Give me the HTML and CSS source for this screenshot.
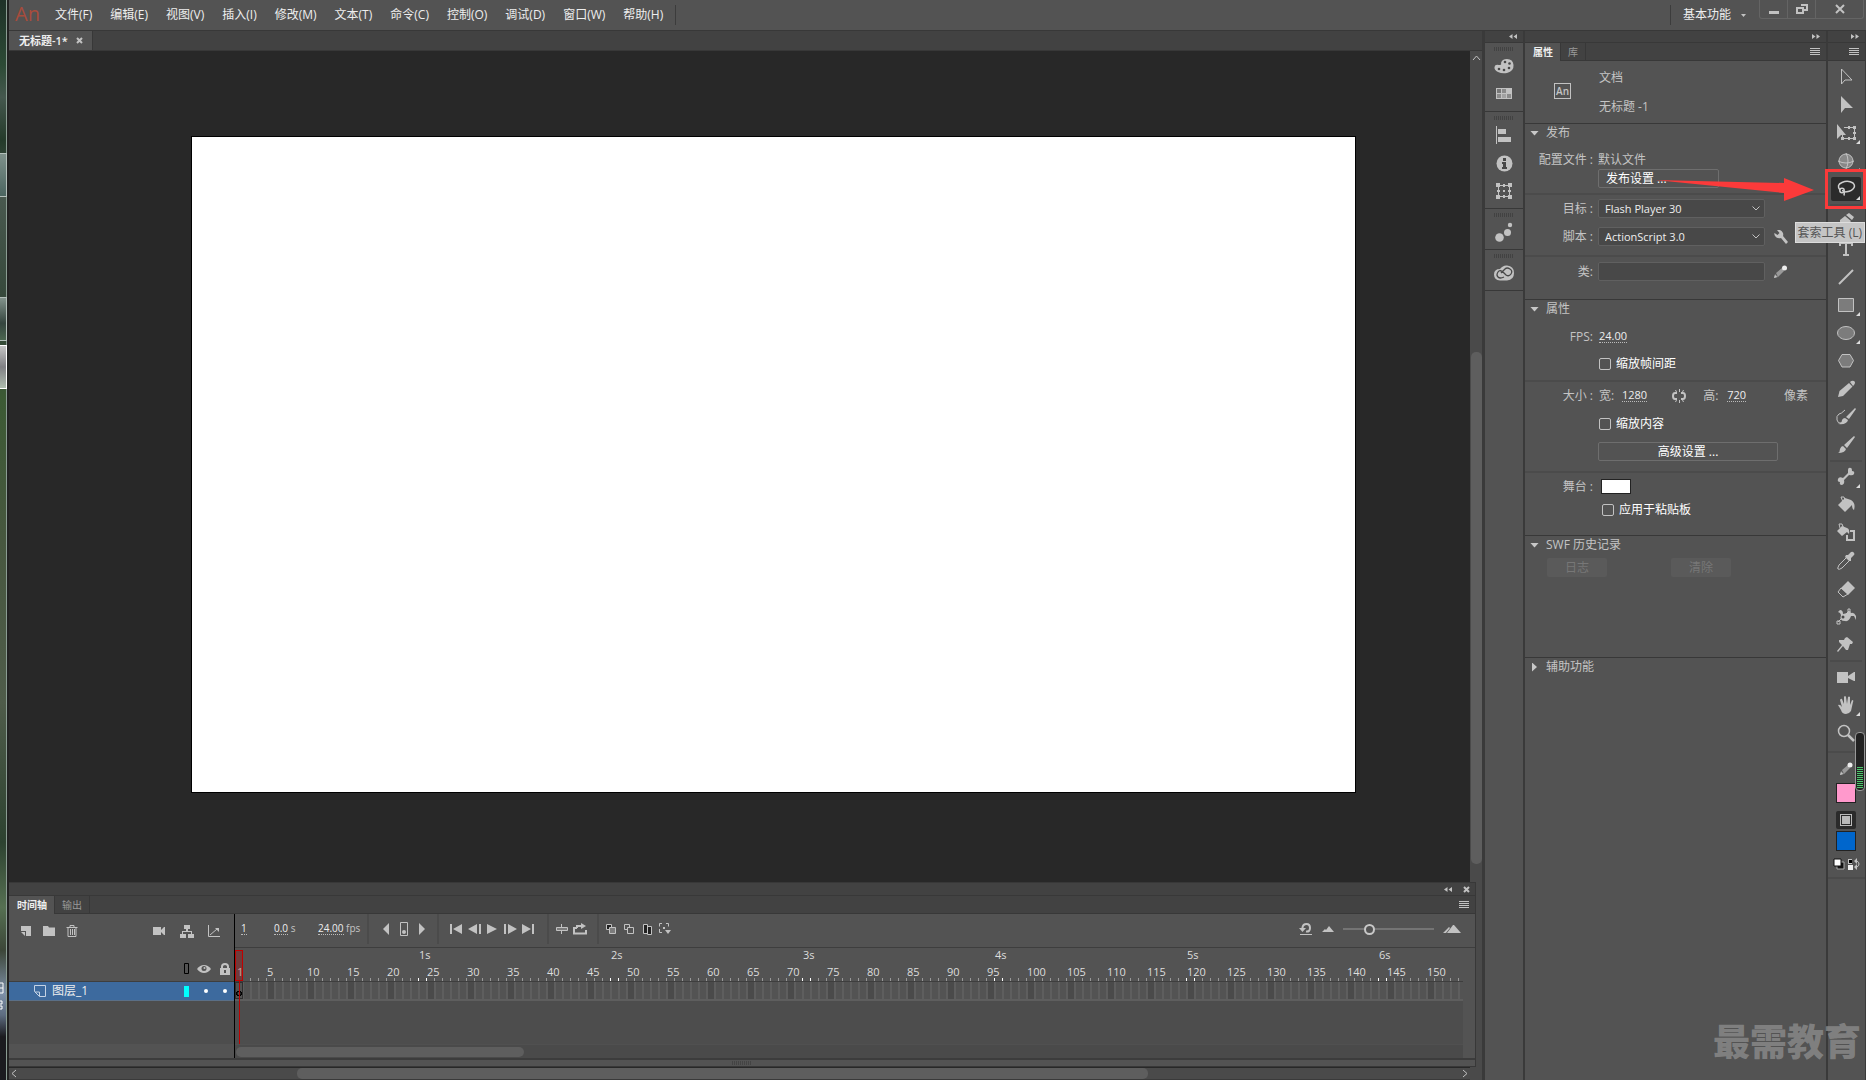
FILE: index.html
```html
<!DOCTYPE html>
<html lang="zh-CN">
<head>
<meta charset="utf-8">
<title>无标题-1*</title>
<link rel="stylesheet" href="styles.css">
</head>
<body>
<div class="desktop">
  <i class="desk-item"></i><i class="desk-item dark"></i><i class="desk-item light"></i>
  <svg class="desk-glyph" width="4" height="28" viewBox="0 0 4 28"><path d="M0 1h3v10H0M0 6h3M0 19h2v3H0M0 24h2v3H0" fill="none" stroke="#fff"/></svg>
</div>
<div class="app">
  <header class="menubar">
    <span class="logo">An</span>
    <nav class="menus">
      <button>文件(F)</button><button>编辑(E)</button><button>视图(V)</button><button>插入(I)</button><button>修改(M)</button><button>文本(T)</button><button>命令(C)</button><button>控制(O)</button><button>调试(D)</button><button>窗口(W)</button><button>帮助(H)</button>
    </nav>
    <button class="workspace-pick">基本功能 <svg width="5" height="3" viewBox="0 0 5 3"><path d="M0 0h5L2.500 3z"/></svg></button>
    <div class="window-buttons">
      <button aria-label="最小化"><svg width="12" height="12" viewBox="0 0 12 12"><path d="M1 8h10v3H1z"/></svg></button>
      <button aria-label="还原"><svg width="12" height="12" viewBox="0 0 12 12"><path class="line w2" d="M5 2h6v5H8M1 5h6v5H1z"/></svg></button>
      <button class="wide" aria-label="关闭"><svg width="12" height="12" viewBox="0 0 12 12"><path class="line w2" d="M2 2l8 8M10 2l-8 8"/></svg></button>
    </div>
  </header>

  <div class="workspace">
    <main class="document">
      <div class="doc-tabs"><div class="doc-tab">无标题-1* <button aria-label="关闭文档"><svg width="7" height="7" viewBox="0 0 7 7"><path class="line w2" d="M1 1l5 5M6 1L1 6"/></svg></button></div></div>
      <div class="view">
        <div class="pasteboard"><div class="stage"></div></div>
        <div class="vscroll"><svg width="9" height="16" viewBox="0 0 9 16"><path class="line" d="M1 9l3.500-4L8 9"/></svg><div class="vtrack"><i></i></div></div>
      </div>

      <section class="timeline">
        <div class="tl-top">
          <button aria-label="折叠"><svg width="8" height="5" viewBox="0 0 8 5"><path d="M3.500 0v5L0 2.500zM8 0v5L4.500 2.500z"/></svg></button>
          <button aria-label="关闭"><svg width="7" height="7" viewBox="0 0 7 7"><path class="line w2" d="M1 1l5 5M6 1L1 6"/></svg></button>
        </div>
        <div class="tabs tl-tabs"><button class="tab on">时间轴</button><button class="tab">输出</button>
          <button class="panel-menu" aria-label="菜单"><svg width="10" height="8" viewBox="0 0 10 8"><path d="M0 0h10v1H0zM0 2h10v1H0zM0 4h10v1H0zM0 6h10v1H0z"/></svg></button></div>
        <div class="tl-body">
          <div class="layers">
            <div class="layer-tools">
              <button aria-label="新建图层"><svg width="12" height="12" viewBox="0 0 12 12"><path d="M1 1h10v10H6V6H1zM1 7h4v4z"/></svg></button>
              <button aria-label="新建文件夹"><svg width="14" height="12" viewBox="0 0 14 12"><path d="M1 1h5l1 1.500h6V11H1z"/></svg></button>
              <button aria-label="删除"><svg width="12" height="12" viewBox="0 0 12 12"><path class="line" d="M0.500 2.500h11M4 2V.500h4V2M2 3v8.500h8V3M4.500 4v6M6.500 4v6M8.500 4v6"/></svg></button>
              <span class="fill"></span>
              <button class="far" aria-label="摄像头"><svg width="13" height="10" viewBox="0 0 13 10"><path d="M0 1h8v8H0zM8 4l3-3h1v8h-1L8 6z"/></svg></button>
              <button class="far" aria-label="父级视图"><svg width="14" height="14" viewBox="0 0 14 14"><path d="M4 1h6v4H8v2h4v3h2v4H8v-4h3V8H3v2h3v4H0v-4h2V7h4V5H4z"/></svg></button>
              <button class="far" aria-label="图层深度"><svg width="14" height="14" viewBox="0 0 14 14"><path class="line" d="M1.500 1v11.500H13M3 11l7-6"/><path d="M8 4h4v4z"/></svg></button>
            </div>
            <div class="layer-head">
              <svg width="5" height="11" viewBox="0 0 5 11"><path d="M.500.500h4v10h-4z" fill="none" stroke="#000"/></svg>
              <svg width="14" height="10" viewBox="0 0 14 10"><path d="M0 5Q3 1 7 1t7 4Q11 9 7 9T0 5z"/><circle cx="7" cy="4.500" r="2.500" fill="#535353"/><circle cx="7.500" cy="4" r="1"/></svg>
              <svg width="12" height="12" viewBox="0 0 12 12"><path class="line w2" d="M3 6V3.500Q3 1 6 1t3 2.500V6"/><path d="M1 5h10v7H1z"/><path d="M5 7h2v3H5z" fill="#535353"/></svg>
            </div>
            <div class="layer-row">
              <svg width="12" height="12" viewBox="0 0 12 12"><path d="M.500.500h11v11h-6L.500 6.500zM1 7h4.500v4.500" fill="none" stroke="#c5d3e5"/></svg>
              <span class="layer-name">图层_1</span><i class="swatch-cyan"></i><i class="dot"></i><i class="dot"></i>
            </div>
            <div class="layer-space"></div><div class="layer-foot"></div>
          </div>
          <div class="frames">
            <div class="playbar">
              <div class="readout"><span class="n1"><u>1</u></span><span class="n2"><u>0.0</u> s</span><span><u>24.00</u> fps</span></div>
              <div class="pgroup nav">
                <button aria-label="上一关键帧"><svg width="12" height="12" viewBox="0 0 12 12"><path d="M9 0v12L3 6z"/></svg></button>
                <button aria-label="关键帧"><svg width="8" height="14" viewBox="0 0 8 14"><path class="line" d="M.500.500h7v13h-7z"/><circle cx="4" cy="10" r="2"/></svg></button>
                <button aria-label="下一关键帧"><svg width="12" height="12" viewBox="0 0 12 12"><path d="M3 0v12l6-6z"/></svg></button>
              </div>
              <div class="pgroup play">
                <button aria-label="转到第一帧"><svg width="12" height="10" viewBox="0 0 12 10"><path d="M0 0h2v10H0zM12 0v10L3 5z"/></svg></button>
                <button aria-label="后退一帧"><svg width="13" height="10" viewBox="0 0 13 10"><path d="M9 0v10L0 5zM11 0h2v10h-2z"/></svg></button>
                <button aria-label="播放"><svg width="10" height="10" viewBox="0 0 10 10"><path d="M0 0v10l10-5z"/></svg></button>
                <button aria-label="前进一帧"><svg width="13" height="10" viewBox="0 0 13 10"><path d="M0 0h2v10H0zM4 0v10l9-5z"/></svg></button>
                <button aria-label="转到最后一帧"><svg width="12" height="10" viewBox="0 0 12 10"><path d="M0 0v10l9-5zM10 0h2v10h-2z"/></svg></button>
              </div>
              <div class="pgroup loop">
                <button aria-label="帧居中"><svg width="12" height="12" viewBox="0 0 12 12"><path class="line grey" d="M.500 4.500h11v3H.500zM5.500 1v3M5.500 8v3"/></svg></button>
                <button aria-label="循环"><svg width="14" height="12" viewBox="0 0 14 12"><path class="line w2" d="M4 5H1v5.500h12V7M4 5V3h5"/><path d="M8 0l5 3-5 3z"/></svg></button>
              </div>
              <div class="pgroup onion">
                <button aria-label="绘图纸外观"><svg width="10" height="10" viewBox="0 0 10 10"><path class="line black" d="M.500.500h5v5h-5z"/><path class="line grey" d="M3.500 3.500h6v6h-6z"/></svg></button>
                <button aria-label="绘图纸轮廓"><svg width="10" height="10" viewBox="0 0 10 10"><path class="line" d="M3 5.500H.500v-5h5V3M3.500 3.500h6v6h-6z"/></svg></button>
                <button aria-label="编辑多个帧"><svg width="9" height="11" viewBox="0 0 9 11"><path class="line black" d="M.500.500h4v9h-4zM4.500 2.500h4v8h-4z"/></svg></button>
                <button aria-label="修改标记"><svg width="12" height="12" viewBox="0 0 12 12"><path class="line" d="M3 .500H.500v3M.500 6v3.500H3M7 .500h2.500v3"/><path d="M4 4h2v2H4zM6 7h6L9 11z"/></svg></button>
              </div>
              <span class="fill"></span>
              <div class="zoombar">
                <button aria-label="重置"><svg width="14" height="12" viewBox="0 0 14 12"><path class="line w2" d="M3.500 6V4.500Q4 1 7.500 1T11 5 7 8.500"/><path d="M0 5h7L3.500 9zM1 11h12v1H1z"/></svg></button>
                <button aria-label="缩小"><svg width="12" height="6" viewBox="0 0 12 6"><path d="M0 6l3-3 1 1 3-4 5 6z"/></svg></button>
                <input type="range" aria-label="时间轴缩放" min="0" max="100" value="26">
                <button aria-label="放大"><svg width="18" height="8" viewBox="0 0 18 8"><path d="M0 8l6-6 1 1-4 5zM4 8l6-8h1l7 8z"/></svg></button>
              </div>
            </div>
            <div class="ruler">
              <div class="seconds"><span>1s</span><span>2s</span><span>3s</span><span>4s</span><span>5s</span><span>6s</span></div>
              <div class="numbers"><span class="first">1</span><span>5</span><span>10</span><span>15</span><span>20</span><span>25</span><span>30</span><span>35</span><span>40</span><span>45</span><span>50</span><span>55</span><span>60</span><span>65</span><span>70</span><span>75</span><span>80</span><span>85</span><span>90</span><span>95</span><span>100</span><span>105</span><span>110</span><span>115</span><span>120</span><span>125</span><span>130</span><span>135</span><span>140</span><span>145</span><span>150</span></div>
              <div class="ticks"></div>
            </div>
            <div class="frame-row"><i class="keyframe"></i></div>
            <div class="frame-space"></div>
            <div class="frame-scroll"><i></i></div>
            <div class="playhead"></div>
          </div>
        </div>
        <div class="tl-grip"><i></i></div>
      </section>
      <div class="hscroll"><svg width="11" height="9" viewBox="0 0 11 9"><path class="line" d="M7 1L3 4.500 7 8"/></svg><div class="htrack"><i></i></div><svg width="11" height="9" viewBox="0 0 11 9"><path class="line" d="M4 1l4 3.500L4 8"/></svg></div>
    </main>

    <aside class="dock">
      <div class="strip"><svg width="8" height="5" viewBox="0 0 8 5"><path d="M3.500 0v5L0 2.500zM8 0v5L4.500 2.500z"/></svg></div>
      <div class="dock-group g2">
        <button aria-label="颜色"><svg width="20" height="16" viewBox="0 0 20 16"><path d="M7 5Q8 1 13 1q6 0 6.500 6T13 15Q8 16 4 14 0 12 .500 9T5 7q3 0 2-2z"/><g fill="#484848"><circle cx="11" cy="4" r="1.300"/><circle cx="15.500" cy="5.500" r="1.300"/><circle cx="15" cy="10" r="1.300"/><circle cx="10" cy="12" r="1.300"/><circle cx="5" cy="11" r="1.300"/></g></svg></button>
        <button aria-label="样本"><svg width="16" height="12" viewBox="0 0 16 12"><path d="M0 0h16v11H0z"/><path fill="#8b8b8b" d="M6 1h4v4H6zM1 6h4v4H1zM11 6h4v4h-4z"/><path fill="#a2a2a2" d="M6 6h4v4H6z"/><path fill="#777" d="M1 1h4v4H1z"/></svg></button>
      </div>
      <div class="dock-group g3">
        <button aria-label="对齐"><svg width="16" height="18" viewBox="0 0 16 18"><path d="M0 0h1v18H0zM2 3h8v5H2zM2 11h13v5H2z"/></svg></button>
        <button aria-label="信息"><svg width="17" height="17" viewBox="0 0 17 17"><circle cx="8.500" cy="8.500" r="8"/><path fill="#484848" d="M7 3h3v3H7zM6 7h4v5h1v2H6v-2h1V9H6z"/></svg></button>
        <button aria-label="变形"><svg width="16" height="16" viewBox="0 0 16 16"><path class="line" d="M2.500 2.500h11v11h-11z"/><path d="M0 0h4v4H0zM7 1h2v3H7zM12 0h4v4h-4zM1 7h3v2H1zM12 7h3v2h-3zM0 12h4v4H0zM7 12h2v3H7zM12 12h4v4h-4zM7 7h2v2H7z"/></svg></button>
      </div>
      <div class="dock-group g1"><button aria-label="画笔库"><svg width="18" height="20" viewBox="0 0 18 20"><circle cx="4.500" cy="15.500" r="4.300"/><circle cx="12.500" cy="10.500" r="3.500"/><circle cx="15" cy="3" r="2.200"/></svg></button></div>
      <div class="dock-group g1"><button aria-label="Creative Cloud"><svg width="22" height="16" viewBox="0 0 22 16"><path d="M7 4Q10 0 14 .500 21 1 21 8t-7 7.500H7Q1 15 1 9.500T7 4z"/><path d="M11 12q-4 2-6 0t0-5 6 1l2 2q3 2 5-1t-1-5-5 0l-4 4" fill="none" stroke="#484848" stroke-width="1.300"/></svg></button></div>
      <div class="dock-rest"></div>
    </aside>

    <aside class="props">
      <div class="strip"><svg width="8" height="5" viewBox="0 0 8 5"><path d="M0 0v5l3.500-2.500zM4.500 0v5L8 2.500z"/></svg></div>
      <div class="tabs"><button class="tab on">属性</button><button class="tab">库</button><button class="panel-menu" aria-label="菜单"><svg width="10" height="8" viewBox="0 0 10 8"><path d="M0 0h10v1H0zM0 2h10v1H0zM0 4h10v1H0zM0 6h10v1H0z"/></svg></button></div>
      <div class="doc-info"><span class="an-box">An</span><div><p>文档</p><p>无标题 -1</p></div></div>

      <section class="section">
        <h2><i class="tri"></i>发布</h2>
        <div class="group tight">
          <div class="row"><span class="label">配置文件 :</span><span>默认文件</span></div>
          <div class="row"><span></span><button class="btn publish">发布设置 ...</button></div>
        </div>
        <div class="group selects">
          <div class="row"><label class="label" for="target">目标 :</label><span class="select"><select id="target"><option>Flash Player 30</option></select><svg width="8" height="5" viewBox="0 0 8 5"><path class="line" d="M.500.500L4 4 7.500.500"/></svg></span></div>
          <div class="row"><label class="label" for="script">脚本 :</label><span class="select"><select id="script"><option>ActionScript 3.0</option></select><svg width="8" height="5" viewBox="0 0 8 5"><path class="line" d="M.500.500L4 4 7.500.500"/></svg></span>
            <button class="tiny" aria-label="ActionScript 设置"><svg width="14" height="14" viewBox="0 0 14 14"><path d="M3 0q4-1 6 3 .500 2 0 3l5 6-2 2-5-6Q3 9 1 6 0 4 .500 3l3 2 2-2z"/></svg></button></div>
        </div>
        <div class="group class-group">
          <div class="row"><label class="label" for="cls">类:</label><input class="field" id="cls" type="text"><button class="tiny" aria-label="编辑类定义"><svg width="14" height="14" viewBox="0 0 14 14"><path d="M0 13l1-4 3 3zM2 8l6-5 2 3-6 6z" fill="#999"/><path d="M0 13l1-3 2 2z"/><circle cx="10.500" cy="3" r="2.500" fill="#eee"/></svg></button></div>
        </div>
      </section>

      <section class="section">
        <h2><i class="tri"></i>属性</h2>
        <div class="group fps">
          <div class="row"><span class="label">FPS:</span><button class="hot">24.00</button></div>
          <div class="row"><span></span><label class="check"><input type="checkbox">缩放帧间距</label></div>
        </div>
        <div class="group size">
          <div class="row"><span class="label">大小 :</span><div class="size-fields"><span class="w">宽:</span><button class="hot">1280</button>
            <button class="link" aria-label="链接宽高"><svg width="14" height="14" viewBox="0 0 14 14"><path class="line w2" d="M5 4H3Q1 4 1 7t2 3h2M9 4h2q2 0 2 3t-2 3H9"/><path class="line" d="M7.500 0v3M7.500 11v3M3.500 1l1 2M11.500 1l-1 2M3.500 13l1-2M11.500 13l-1-2"/></svg></button>
            <span class="h">高:</span><button class="hot">720</button><span class="unit">像素</span></div></div>
          <div class="row"><span></span><label class="check"><input type="checkbox">缩放内容</label></div>
          <div class="row"><span></span><button class="btn advanced">高级设置 ...</button></div>
        </div>
        <div class="group stage-group">
          <div class="row"><span class="label">舞台 :</span><button class="stage-swatch" aria-label="舞台颜色"></button></div>
          <div class="row"><span></span><label class="check inset"><input type="checkbox">应用于粘贴板</label></div>
        </div>
      </section>

      <section class="section">
        <h2><i class="tri"></i>SWF 历史记录</h2>
        <div class="group history"><button disabled>日志</button><button disabled>清除</button></div>
      </section>
      <section class="last"><h2><i class="tri closed"></i>辅助功能</h2></section>
    </aside>

    <aside class="tools">
      <div class="strip"><svg width="8" height="5" viewBox="0 0 8 5"><path d="M0 0v5l3.500-2.500zM4.500 0v5L8 2.500z"/></svg></div>
      <div class="tabs"><button class="panel-menu" aria-label="菜单"><svg width="10" height="8" viewBox="0 0 10 8"><path d="M0 0h10v1H0zM0 2h10v1H0zM0 4h10v1H0zM0 6h10v1H0z"/></svg></button></div>
      <div class="tool-list">
        <button aria-label="选择工具"><svg viewBox="0 0 20 20"><path class="line" d="M5.500 2v15L9 13h7z"/></svg></button>
        <button aria-label="部分选取工具"><svg viewBox="0 0 20 20"><path d="M5 1v17l4-5h8z"/></svg></button>
        <button class="more" aria-label="任意变形工具"><svg viewBox="0 0 20 20"><path d="M1 1v15l4-4h5z"/><path class="line" d="M8 4.500h10.500v11H6.500v-4"/><path d="M17 3h3v3h-3zM17 14h3v3h-3zM12 3h2v3h-2zM5 14h3v3H5zM12 14h2v3h-2zM17 9h3v2h-3z"/></svg></button>
        <button class="more" aria-label="3D 旋转工具"><svg viewBox="0 0 20 20"><circle cx="10" cy="10" r="7" fill="#888"/><path class="line" d="M3 10a7 7 0 1 0 14 0 7 7 0 1 0-14 0M2 10q8 4 16 0M10 2q4 8 0 16"/></svg></button>
        <button class="more active" aria-label="套索工具"><svg viewBox="0 0 20 20"><g fill="none" stroke="#d0d0d0" stroke-width="1.500"><path d="M4 11Q0 6 6 3.500T17 4q3 3 0 6t-9 3"/><circle cx="6" cy="11.500" r="2.200"/><path d="M6 11.500q3 0 2 5"/></g></svg></button>
        <hr>
        <button aria-label="钢笔工具"><svg viewBox="0 0 20 20"><path d="M4 9l5-4 6 5-5 6-6 2zM10 4l3-2 5 4-2 3z"/></svg></button>
        <button aria-label="文本工具"><svg viewBox="0 0 20 20"><path d="M3 3h14v4h-2V5h-4v10h2v2H7v-2h2V5H5v2H3z"/></svg></button>
        <button aria-label="线条工具"><svg viewBox="0 0 20 20"><path class="line w2" d="M3 17L17 3"/></svg></button>
        <button class="more" aria-label="矩形工具"><svg viewBox="0 0 20 20"><path class="line grey" d="M2.500 3.500h15v13h-15z"/></svg></button>
        <button class="more" aria-label="椭圆工具"><svg viewBox="0 0 20 20"><ellipse class="line grey" cx="10" cy="10" rx="8.500" ry="6.500"/></svg></button>
        <button aria-label="多角星形工具"><svg viewBox="0 0 20 20"><path class="line grey" d="M6 3.500h8l3.500 6-3.500 6.500H6L2.500 9.500z"/></svg></button>
        <button aria-label="铅笔工具"><svg viewBox="0 0 20 20"><path d="M2 18l1.500-6L13 4l3.500 3.500L7 17zM14 3q2-2 4-1t0 4l-1 1z"/></svg></button>
        <button aria-label="画笔工具"><svg viewBox="0 0 20 20"><path d="M19 1l1 1-7 10-3-2zM9 11l3 2q-1 5-10 4 4-1 4-4 1-2 3-2z"/><path class="line" d="M9 3Q5 7 3 7 0 9 1 13t4 3"/></svg></button>
        <button aria-label="画笔"><svg viewBox="0 0 20 20"><path d="M18 1l1 1-8 11-3-3zM7 11l3 3q-1 4-8 4 2-1 2-4 1-3 3-3z"/></svg></button>
        <hr>
        <button class="more" aria-label="骨骼工具"><svg viewBox="0 0 20 20"><path d="M12 3q0-3 3-2 1 0 1 3 3 0 2 3-1 2-5 1l-5 5q1 4-2 5-3 0-2-3-3 0-2-3t5-1l5-5z"/></svg></button>
        <button aria-label="颜料桶工具"><svg viewBox="0 0 20 20"><path d="M2 10l7-7 6 2q5 3 3 10-2-1-2-5l-7 7z"/><path class="line" d="M7 7L5 2h3l2 6"/></svg></button>
        <button aria-label="墨水瓶工具"><svg viewBox="0 0 20 20"><path d="M1 8l5-5 5 2q3 1 2 6l-2-2-5 4z"/><path class="line" d="M4 5L3 1h3l2 5"/><path class="line w2" d="M14 8h4v9h-7v-5"/></svg></button>
        <button aria-label="滴管工具"><svg viewBox="0 0 20 20"><path class="line" d="M11 6l3 3-8 8q-3 2-4 1-1 0 1-4z"/><path d="M10 4l2 0 3-3q2-1 3 1 1 1 0 2l-3 3 0 3-2 0-4-4z"/></svg></button>
        <button aria-label="橡皮擦工具"><svg viewBox="0 0 20 20"><path d="M12 2l7 7-7 7-7-7z"/><path class="line" d="M5 9l-3 4 5 5 5-3M5 9l7 6"/></svg></button>
        <button aria-label="宽度工具"><svg viewBox="0 0 20 20"><path d="M4 6l-2-1 2-2q3 0 3 4 4 0 7-3l1 2q3-1 5 3v4l-2-4-3 0q-2 6-6 5-6 0-4-6z"/><path class="line" d="M2 15L13 4M1 14h3v3H1zM12 2h2v3h-2z"/><circle cx="7" cy="10" r="1.500" fill="#484848"/></svg></button>
        <button aria-label="资源变形工具"><svg viewBox="0 0 20 20"><path d="M9 3l2-1 6 5-1 2-2 0-2 6-2 0-3-4-5 6-1-1 5-6-3-3 0-2 5 0z"/></svg></button>
        <hr class="short">
        <button aria-label="摄像头"><svg viewBox="0 0 20 20"><path d="M1 5h11v11H1zM12 9l6-4h1v9h-1l-6-3z"/></svg></button>
        <button class="more" aria-label="手形工具"><svg viewBox="0 0 20 20"><path d="M2 10q2-1 4 2L4 5q1-2 2-1l2 5V2q1-2 2 0l1 7 1-7q1-1 2 0v8l2-5q2 0 1 2l-2 9q-2 3-5 3-4 0-5-4z"/></svg></button>
        <button aria-label="缩放工具"><svg viewBox="0 0 20 20"><circle cx="8" cy="8" r="5.500" fill="none" stroke="#c2c2c2" stroke-width="1.500"/><path d="M12 12l6 6" stroke="#c2c2c2" stroke-width="2.500"/></svg></button>
        <hr class="full">
        <button aria-label="笔触颜色"><svg viewBox="0 0 20 20"><path d="M4 16l1-4 3 3zM6 11l6-5 2 3-6 6z" fill="#999"/><path d="M4 16l1-3 2 2z"/><circle cx="14" cy="6" r="2.500" fill="#eee"/></svg></button>
        <button class="color pink" aria-label="粉色"></button>
        <button class="color fillmode" aria-label="填充模式"><i></i></button>
        <button class="color blue" aria-label="蓝色"></button>
        <div class="swap">
          <button aria-label="黑白"><svg width="12" height="12" viewBox="0 0 12 12"><path d="M4 4h7v7H4z" fill="#111" stroke="#aaa"/><path d="M1 1h7v7H1z" fill="#fff" stroke="#111"/></svg></button>
          <button aria-label="交换颜色"><svg width="12" height="12" viewBox="0 0 12 12"><path d="M0 1h4v5H0z"/><path d="M1 2h3v3H1z" fill="#000"/><path d="M0 7h5v5H0z" fill="#eee"/><path class="line" d="M8 3h1q2 1 2 3t-2 3H8"/><path d="M9 0v6L6 3zM9 6v6L6 9z"/></svg></button>
        </div>
        <hr class="full end">
      </div>
    </aside>
  </div>
</div>

<svg class="callout-arrow" width="160" height="24" viewBox="0 0 160 24"><path d="M0 2L129 5V0l30 12-30 11v-8z"/></svg>
<div class="callout-box"></div>
<div class="tooltip">套索工具 (L)</div>
<div class="meter"><i></i></div>
<div class="watermark">最需教育</div>
</body>
</html>
```

FILE: styles.css
```css
* { box-sizing: border-box; }

body {
  margin: 0;
  height: 100vh;
  min-height: 900px;
  display: flex;
  position: relative;
  overflow: hidden;
  background: #535353;
  color: #c4c4c4;
  font: 12px/16px "Open Sans", "Noto Sans CJK SC", sans-serif;
}

button, select, input { font: inherit; color: inherit; margin: 0; }
button { display: flex; align-items: center; justify-content: center; padding: 0; border: 0; background: none; white-space: nowrap; }
h2, p { margin: 0; font-size: 12px; font-weight: 400; }
svg { display: block; flex: none; fill: #c2c2c2; }
.line { fill: none; stroke: #c2c2c2; stroke-width: 1px; }
.w2 { stroke-width: 2px; }
.grey { fill: #7c7c7c; }
.black { fill: #222; }
.fill { flex: 1; }

/* desktop edge left of the window */
.desktop {
  position: relative;
  flex: none;
  width: 9px;
  border-right: 2px solid #222;
  box-shadow: inset -1px 0 #8a9c92;
  background: linear-gradient(#1f3128, #2c4a35 6%, #45584e 9%, #243a2a 13%, #49594f 18%, #314436 30%, #3c5a34 37%, #47573f 50%, #4f5c4a 65%, #2d4230 78%, #567052 84%, #3c4638 88%, #7d90a8 92%, #5d6c80 94%, #1b1b1f 96%);
}
.desk-item { position: absolute; left: 0; top: 153px; width: 7px; height: 44px; border: 1px solid #b4c0bb; border-left: 0; background: linear-gradient(#7f918b, #4b6560); }
.desk-item.dark { top: 297px; background: linear-gradient(#82928b, #35453f 60%, #4b6650); }
.desk-item.light { top: 345px; border-color: #fff; background: linear-gradient(#c4c4c4, #808084 50%, #aebcae); }
.desk-glyph { position: absolute; left: 0; top: 982px; }

.app { flex: 1; min-width: 0; display: flex; flex-direction: column; }

/* menu bar */
.menubar { flex: none; height: 31px; display: flex; align-items: flex-start; border-bottom: 1px solid #383838; }
.logo { width: 46px; padding-left: 6px; font: 20px/27px "Open Sans", sans-serif; color: #a84c3c; }
.menus { display: flex; gap: 18px; height: 20px; margin-top: 5px; padding-right: 12px; border-right: 1px solid #3c3c3c; color: #eee; }
.workspace-pick { height: 20px; margin: 5px 13px 0 auto; padding-left: 12px; gap: 10px; border-left: 1px solid #3c3c3c; color: #eee; }
.window-buttons { display: flex; height: 19px; margin-right: 2px; border: 1px solid #646464; border-top: 0; border-radius: 0 0 3px 3px; }
.window-buttons button { width: 28px; border-right: 1px solid #646464; }
.window-buttons .wide { width: 47px; border: 0; }

.workspace { flex: 1; min-height: 0; display: flex; background: #3a3a3a; gap: 2px; }

/* document */
.document { flex: 1; min-width: 0; display: flex; flex-direction: column; background: #4a4a4a; border-right: 1px solid #3a3a3a; }
.doc-tabs { flex: none; height: 20px; display: flex; background: #424242; border-bottom: 1px solid #383838; }
.doc-tab { display: flex; align-items: center; gap: 8px; padding: 0 9px 0 10px; background: #535353; border-right: 1px solid #383838; color: #eee; font-weight: 600; font-size: 11px; }
.view { flex: 1; min-height: 0; display: flex; }
.pasteboard { flex: 1; display: flex; background: #282828; padding: 86px 115px 90px 183px; }
.stage { flex: 1; background: #fff; outline: 1px solid #000; }
.vscroll { width: 12px; display: flex; flex-direction: column; align-items: center; }
.vtrack { flex: 1; width: 11px; display: grid; grid-template-rows: 285fr 512fr 18fr; }
.vtrack i { grid-row: 2; }
.vtrack i, .htrack i, .frame-scroll i { background: #5e5e5e; border-radius: 5px; }
.hscroll { flex: none; height: 13px; display: flex; align-items: center; margin-right: 12px; border-top: 1px solid #282828; border-bottom: 1px solid #3a3a3a; }
.htrack { flex: 1; height: 11px; display: grid; grid-template-columns: 276fr 849fr 310fr; }
.htrack i { grid-column: 2; }

/* tabs shared by panels */
.tabs { flex: none; height: 18px; display: flex; background: #424242; border-bottom: 1px solid #383838; }
.tab { padding: 0 7px; border-right: 1px solid #383838; font-size: 10px; color: #999; }
.tab.on { height: 18px; padding: 0 7px 0 8px; background: #535353; color: #eee; font-weight: 600; }
.panel-menu { margin: 0 6px 0 auto; }

/* timeline */
.timeline { flex: none; margin-right: 6px; background: #535353; border: 1px solid #383838; border-left: 0; }
.tl-top { height: 13px; display: flex; justify-content: flex-end; align-items: center; gap: 11px; padding-right: 5px; background: #424242; border-bottom: 1px solid #383838; }
.tl-body { display: grid; grid-template-columns: 226px 1fr; height: 144px; }
.layers, .frames { display: grid; grid-template-rows: 34px 34px 19px 43px 14px; min-width: 0; }
.layers { border-right: 1px solid #000; }
.layer-tools { display: flex; align-items: center; padding: 0 7px 0 5px; }
.layer-tools button { width: 23px; }
.layer-tools .far { width: 27px; }
.layer-head { display: flex; align-items: center; justify-content: flex-end; padding: 8px 3px 0 0; gap: 8px; border-bottom: 1px solid #3e3e3e; }
.layer-row { display: flex; align-items: center; padding: 0 7px 0 25px; background: #3d6a9e; color: #eee; border-bottom: 1px solid #5b6f86; }
.layer-name { flex: 1; padding-left: 6px; }
.swatch-cyan { width: 5px; height: 11px; background: #0ff; }
.dot { width: 4px; height: 4px; border-radius: 2px; background: #fff; margin-left: 15px; }
.layer-space { background: #4d4d4d; }
.frames { position: relative; overflow: hidden; }
.playbar { display: flex; align-items: center; padding-bottom: 3px; border-bottom: 1px solid #3e3e3e; }
.readout { display: flex; width: 132px; padding: 0 0 0 6px; font-size: 10px; line-height: 11px; }
.readout u, .hot { text-decoration: none; border-bottom: 1px dotted #bbb; color: #eee; }
.readout u { display: inline-block; }
.n1 { width: 33px; }
.n2 { width: 44px; }
.pgroup { display: flex; align-items: center; height: 30px; border-left: 2px solid #4b4b4b; }
.pgroup button { width: 18px; height: 20px; }
.nav { padding: 0 6px 0 8px; }
.play { padding: 0 10px 0 8px; }
.loop { padding: 0 8px 0 4px; }
.onion { padding-left: 3px; }
.zoombar { display: flex; align-items: center; gap: 9px; margin-right: 14px; }
.zoombar input { appearance: none; width: 91px; height: 11px; background: linear-gradient(#747474, #747474) center / 100% 2px no-repeat; }
.zoombar input::-webkit-slider-thumb { appearance: none; width: 11px; height: 11px; border: 2px solid #c8c8c8; border-radius: 6px; background: #535353; }
.ruler { display: grid; grid-template-rows: 14px 16px 3px; overflow: hidden; margin-right: 12px; border-bottom: 1px solid #3e3e3e; font-size: 11px; color: #ddd; line-height: 14px; }
.seconds, .numbers { display: flex; min-width: 0; }
.seconds { padding-left: 184px; }
.seconds span { flex: none; width: 192px; }
.numbers span { flex: none; width: 40px; line-height: 20px; }
.numbers .first { width: 32px; padding-left: 2px; }
.ticks {
  background:
    repeating-linear-gradient(90deg, transparent 0 183px, #fff 183px 184px, transparent 184px 191px, #fff 191px 192px),
    repeating-linear-gradient(90deg, transparent 0 7px, #999 7px 8px);
}
.frame-row {
  display: flex;
  margin-right: 12px;
  border-bottom: 2px solid #5e5e5e;
  background:
    repeating-linear-gradient(90deg, #5e5e5e 0 1px, transparent 1px 7px, #5e5e5e 7px 8px),
    repeating-linear-gradient(90deg, #535353 0 32px, #4a4a4a 32px 40px);
}
.keyframe { width: 8px; border: 1px solid #303030; background: radial-gradient(circle at 50% 70%, #535353 1px, #000 2px 3px, #535353 3px); }
.frame-space { margin-right: 12px; background: #4d4d4d; }
.frame-scroll { display: grid; grid-template-columns: 288fr 940fr; padding: 2px 0 1px 1px; margin-right: 12px; background: #4a4a4a; border-top: 1px solid #505050; }
.playhead { position: absolute; left: 0; top: 36px; width: 8px; height: 31px; border: 1px solid #c00000; background: #c0000044; }
.playhead::after { content: ""; position: absolute; left: 3px; top: 29px; width: 1px; height: 64px; background: #c00000; }
.tl-grip { height: 8px; border-top: 2px solid #3c3c3c; padding-top: 1px; }
.tl-grip i { display: block; width: 20px; height: 4px; margin: 0 auto; background: repeating-linear-gradient(90deg, #444 0 1px, transparent 1px 2px); }

/* panels on the right */
.strip { flex: none; height: 12px; display: flex; align-items: center; justify-content: flex-end; background: #424242; padding-right: 6px; border-bottom: 1px solid #383838; }
.dock, .props, .tools { flex: none; display: flex; flex-direction: column; background: #535353; }
.dock { width: 38px; }
.dock-group { flex: none; padding-top: 9px; border-bottom: 1px solid #383838; background: repeating-linear-gradient(90deg, #424242 0 1px, transparent 1px 2px) 9px 4px / 20px 4px no-repeat; }
.dock-group button { width: 38px; height: 28px; }
.g2 { height: 69px; }
.g3 { height: 97px; }
.g1 { height: 41px; }

.props { width: 301px; }
.doc-info { height: 63px; display: flex; align-items: center; gap: 28px; padding-left: 29px; border-bottom: 1px solid #383838; }
.doc-info div { display: grid; gap: 13px; }
.an-box { width: 17px; height: 16px; margin-bottom: 2px; border: 1px solid #c2c2c2; font: 600 10px/14px "Open Sans", sans-serif; text-align: center; }
.section { border-bottom: 1px solid #383838; }
h2 { height: 18px; display: flex; align-items: center; gap: 7px; padding-left: 5px; }
.tri { width: 9px; height: 5px; background: #c8c8c8; clip-path: polygon(0 0, 100% 0, 50% 100%); }
.tri.closed { width: 5px; height: 9px; margin: 0 2px; clip-path: polygon(0 0, 100% 50%, 0 100%); }
.group { display: flex; flex-direction: column; gap: 8px; border-bottom: 2px solid #4b4b4b; }
.group:last-child { border: 0; }
.row { display: grid; grid-template-columns: 68px 167px auto; column-gap: 5px; height: 19px; align-items: center; justify-content: start; }
.label { text-align: right; white-space: nowrap; }
.tight { gap: 0; padding: 8px 0 5px; }
.selects { padding: 4px 0 9px; gap: 9px; }
.class-group { padding: 5px 0 18px; }
.fps { padding: 9px 0 7px; }
.size { padding: 4px 0 10px; gap: 9px; }
.stage-group { padding: 4px 0 16px; gap: 4px; }
.btn { height: 19px; border: 1px solid #6e6e6e; border-radius: 2px; color: #fff; }
.publish { width: 121px; padding-left: 7px; justify-content: flex-start; }
.advanced { width: 180px; }
.select { display: grid; align-items: center; }
.select select, .select svg { grid-area: 1 / 1; }
.select svg { justify-self: end; margin-right: 5px; pointer-events: none; }
select, .field { appearance: none; width: 167px; height: 19px; padding: 0 6px; border: 1px solid #606060; border-radius: 2px; background: #484848; color: #eee; font-size: 11px; }
.tiny { width: 14px; margin-left: 4px; }
.hot { justify-self: start; margin-left: 1px; font-size: 11px; line-height: 12px; }
.check { display: flex; align-items: center; gap: 5px; color: #fff; padding-left: 1px; }
.check.inset { padding-left: 4px; }
.check input { appearance: none; width: 12px; height: 12px; border: 1px solid #c2c2c2; border-radius: 2px; }
.size-fields { display: flex; align-items: center; width: 210px; padding-left: 1px; white-space: nowrap; }
.size-fields .w { width: 22px; }
.link { margin: 0 17px 0 25px; }
.size-fields .h { width: 23px; }
.unit { margin-left: auto; }
.stage-swatch { width: 30px; height: 15px; margin-left: 3px; background: #fff; border: 1px solid #222; }
.history { height: 103px; flex-direction: row; align-items: flex-start; gap: 64px; padding: 4px 0 0 22px; }
.history button { width: 60px; height: 19px; background: #5a5a5a; border-radius: 2px; color: #777; }

/* tool column */
.tools { width: 38px; border-right: 1px solid #3a3a3a; }
.tool-list { padding: 2px 3px 0 2px; display: flex; flex-direction: column; align-items: center; }
.tool-list > button { position: relative; width: 30px; height: 28px; flex: none; }
.tool-list > button > svg { width: 20px; height: 20px; }
.tool-list .active::before { content: ""; position: absolute; inset: 2px 0; border-radius: 2px; background: #2b2b2b; }
.tool-list .active svg { position: relative; }
.more::after { content: ""; position: absolute; right: 1px; bottom: 3px; border: 2px solid; border-color: transparent #ddd #ddd transparent; }
hr { flex: none; align-self: stretch; height: 2px; margin: 1px 0; border: 0; background: #4b4b4b; }
hr.full { margin: 4px -3px 2px -2px; }
.tool-list > .color { width: 20px; height: 20px; border: 1px solid #222; }
.pink { background: #ff99cc; }
.blue { background: #0066cc; }
.tool-list > .fillmode { height: 18px; margin: 8px 0 2px; border: 0; border-radius: 2px; background: #2b2b2b; }
.fillmode i { width: 12px; height: 12px; border: 1px solid #bbb; padding: 1px; background: #bbb content-box; }
.swap { display: flex; gap: 3px; margin-top: 7px; }
hr.end { margin-top: 7px; }

/* overlays */
.callout-arrow { position: absolute; top: 178px; right: 51px; fill: #fb3a3a; }
.callout-box { position: absolute; top: 169px; right: 0; width: 41px; height: 40px; border: 3px solid #fb3a3a; }
.tooltip { position: absolute; top: 222px; right: 1px; height: 21px; padding: 0 2px; border: 1px solid #ddd; background: #c5c5c5; color: #555; line-height: 19px; }
.meter { position: absolute; top: 732px; right: 1px; width: 10px; height: 59px; padding: 34px 1px 1px; border: 1px solid #999; border-radius: 4px; background: #222; }
.meter i { display: block; height: 22px; background: repeating-linear-gradient(#4bc86c 0 1px, transparent 1px 2px); }
.watermark { position: absolute; right: 5px; bottom: 20px; font: 900 37px/40px "Noto Sans CJK SC", sans-serif; color: #888888dd; }
```
